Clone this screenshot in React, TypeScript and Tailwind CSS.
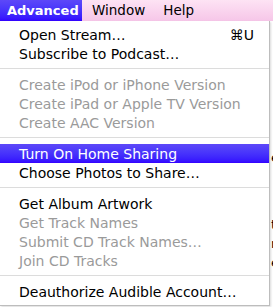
const items: Array<
  | { type: "item"; label: string; disabled?: boolean; active?: boolean; shortcut?: string }
  | { type: "sep" }
> = [
  { type: "item", label: "Open Stream…", shortcut: "⌘U" },
  { type: "item", label: "Subscribe to Podcast…" },
  { type: "sep" },
  { type: "item", label: "Create iPod or iPhone Version", disabled: true },
  { type: "item", label: "Create iPad or Apple TV Version", disabled: true },
  { type: "item", label: "Create AAC Version", disabled: true },
  { type: "sep" },
  { type: "item", label: "Turn On Home Sharing", active: true },
  { type: "item", label: "Choose Photos to Share…" },
  { type: "sep" },
  { type: "item", label: "Get Album Artwork" },
  { type: "item", label: "Get Track Names", disabled: true },
  { type: "item", label: "Submit CD Track Names…", disabled: true },
  { type: "item", label: "Join CD Tracks", disabled: true },
  { type: "sep" },
  { type: "item", label: "Deauthorize Audible Account…" },
];

export default function App() {
  return (
    <div
      className="flex h-[307px] w-[273px] flex-col overflow-hidden bg-white text-[14px] text-black"
      style={{ fontFamily: '"DejaVu Sans", Verdana, sans-serif' }}
    >
      {/* menu bar */}
      <div className="flex h-[21px] shrink-0 items-stretch bg-gradient-to-b from-[#fde3f4] to-[#f6c6e8] text-[13.5px]">
        <div className="flex w-[82px] items-center bg-gradient-to-b from-[#5d48f8] to-[#3300ff] pl-[7px] text-[13px] font-bold text-white">
          Advanced
        </div>
        <div className="flex items-center pl-[10px]">Window</div>
        <div className="flex items-center pl-[18px]">Help</div>
      </div>

      <div className="flex flex-1 items-start">
        {/* menu */}
        <div className="w-[270px] shrink-0 border-b border-r border-[#bdbdbd] bg-white pb-[4px] pt-[4px] shadow-[1px_1px_2px_rgba(0,0,0,0.15)]">
          {items.map((it, i) =>
            it.type === "sep" ? (
              <div key={i} className="mb-[6px] mt-[5px] h-px bg-[#dcdcdc]" />
            ) : (
              <div
                key={i}
                className={
                  "flex h-[19px] items-center justify-between pl-[19px] pr-[15px] leading-none " +
                  (it.active
                    ? "bg-gradient-to-b from-[#5d48f8] to-[#3300ff] text-white"
                    : it.disabled
                      ? "text-[#9a9a9a]"
                      : "")
                }
              >
                <span>{it.label}</span>
                {it.shortcut && <span>{it.shortcut}</span>}
              </div>
            ),
          )}
        </div>
        {/* sliver of the page behind */}
        <div className="flex flex-col pl-[1px] pt-[127px] text-[13px] leading-[19px]">
          <span>e</span>
          <span className="mt-[48px]">t</span>
          <span>n</span>
          <span>e</span>
        </div>
      </div>
    </div>
  );
}
